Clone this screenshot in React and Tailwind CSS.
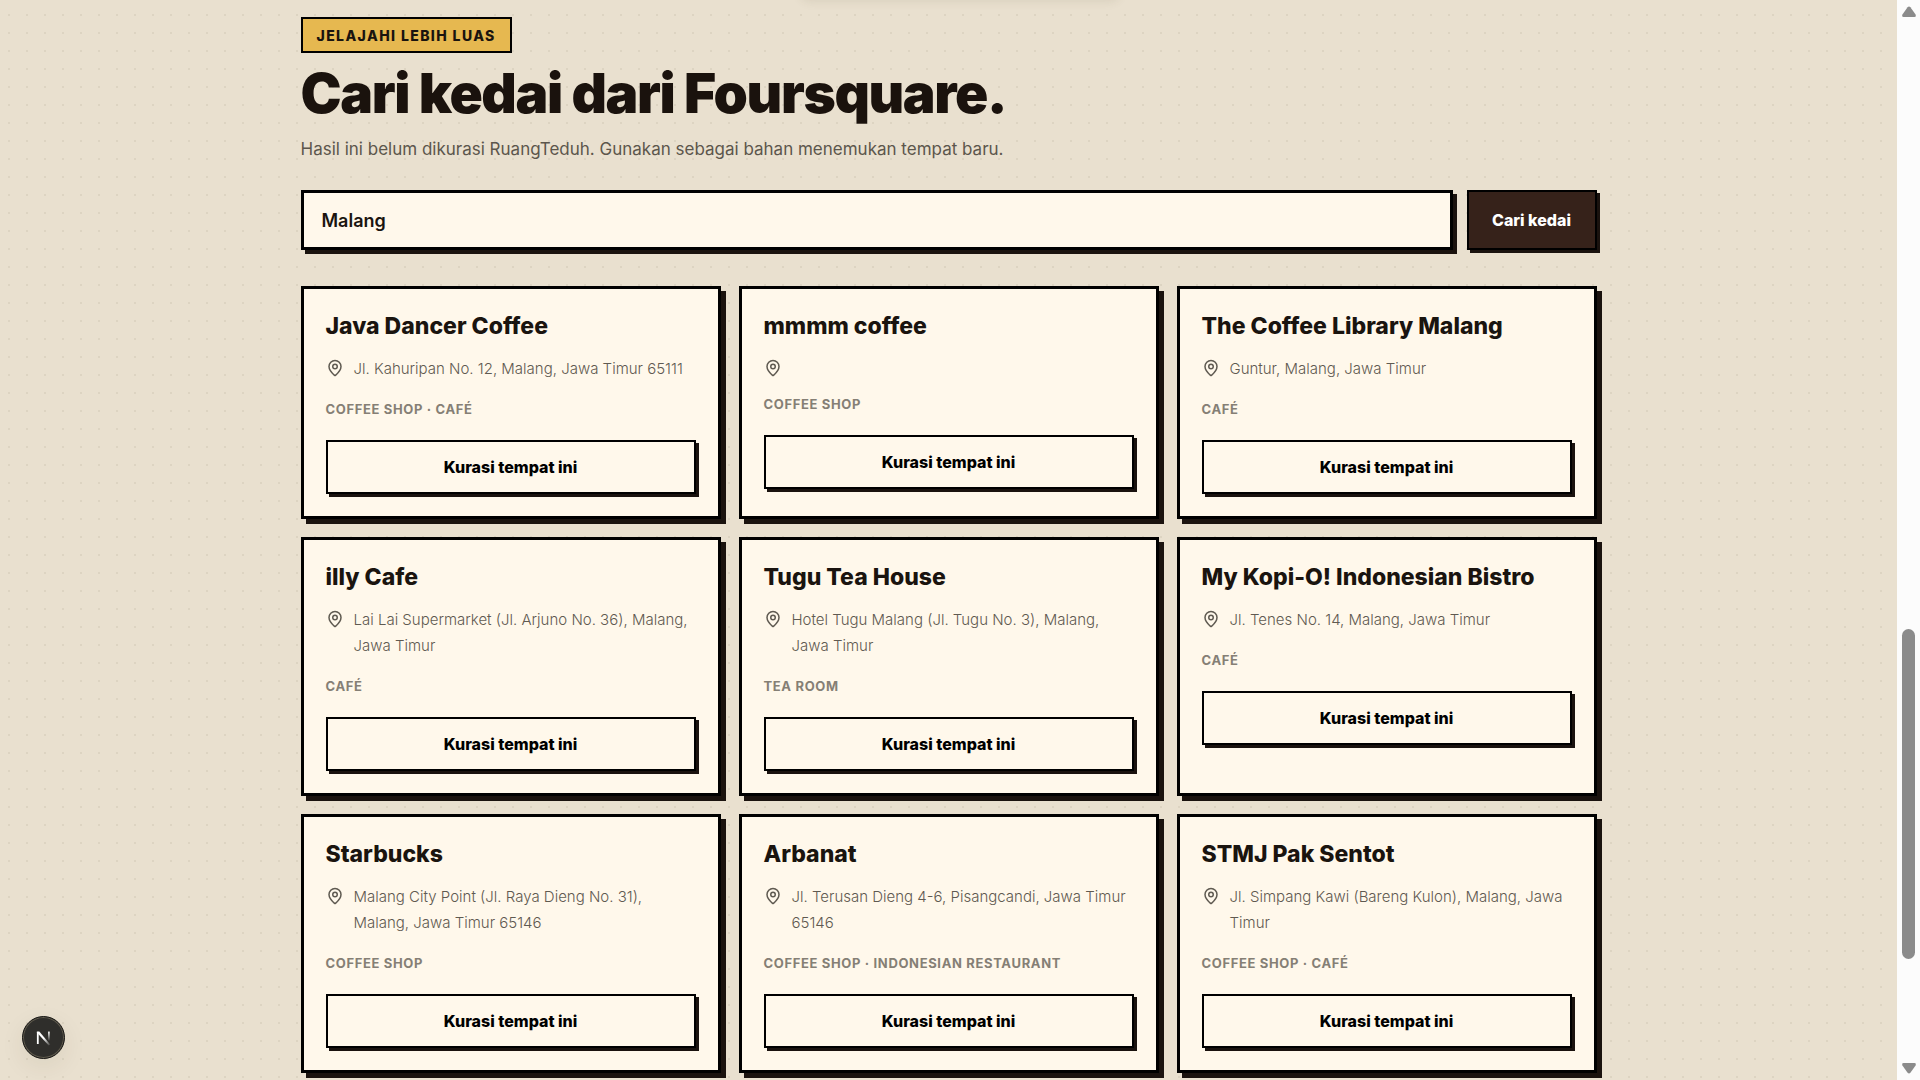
import { useState } from 'react'
import { MapPin } from 'lucide-react'

const PLACES = [
  { name: 'Java Dancer Coffee', address: 'Jl. Kahuripan No. 12, Malang, Jawa Timur 65111', categories: ['Coffee Shop', 'Café'] },
  { name: 'mmmm coffee', address: '', categories: ['Coffee Shop'] },
  { name: 'The Coffee Library Malang', address: 'Guntur, Malang, Jawa Timur', categories: ['Café'] },
  { name: 'illy Cafe', address: 'Lai Lai Supermarket (Jl. Arjuno No. 36), Malang, Jawa Timur', categories: ['Café'] },
  { name: 'Tugu Tea House', address: 'Hotel Tugu Malang (Jl. Tugu No. 3), Malang, Jawa Timur', categories: ['Tea Room'] },
  { name: 'My Kopi-O! Indonesian Bistro', address: 'Jl. Tenes No. 14, Malang, Jawa Timur', categories: ['Café'] },
  { name: 'Starbucks', address: 'Malang City Point (Jl. Raya Dieng No. 31), Malang, Jawa Timur 65146', categories: ['Coffee Shop'] },
  { name: 'Arbanat', address: 'Jl. Terusan Dieng 4-6, Pisangcandi, Jawa Timur 65146', categories: ['Coffee Shop', 'Indonesian Restaurant'] },
  { name: 'STMJ Pak Sentot', address: 'Jl. Simpang Kawi (Bareng Kulon), Malang, Jawa Timur', categories: ['Coffee Shop', 'Café'] },
]

function PlaceCard({ place }) {
  return (
    <article className="border-3 border-black bg-[#fff8eb] p-[22px] shadow-[5px_5px_0_#1a120e]">
      <h3 className="text-[23px] leading-[30px] font-extrabold text-[#1a140f]">{place.name}</h3>
      <div className="mt-[15px] flex items-start gap-2.5 text-[#5f5a51]">
        <MapPin size={18} className="mt-[3px] flex-shrink-0" />
        <p className="text-[15px] leading-[26px] font-light">{place.address}</p>
      </div>
      <p className="mt-[18px] text-[13px] leading-[18px] font-bold tracking-wider uppercase text-[#857f75]">
        {place.categories.join(' · ')}
      </p>
      <button className="mt-[22px] h-[54px] w-full border-2 border-black bg-[#fff8eb] text-[16px] font-extrabold text-black shadow-[3px_3px_0_#1a120e]">
        Kurasi tempat ini
      </button>
    </article>
  )
}

function Scrollbar() {
  return (
    <div aria-hidden="true" className="flex w-[23px] flex-shrink-0 flex-col items-center bg-[#fcfcfc] py-1.5">
      <svg width="14" height="12" viewBox="0 0 14 12" fill="#8b8b8b">
        <path d="M5.6 1.2Q7 -.4 8.4 1.2L13.6 8.6Q14.4 11 12.4 11H1.6Q-.4 11 .4 8.6Z" />
      </svg>
      <div className="grow-[611]" />
      <div className="h-[330px] w-[13px] rounded-full bg-[#8b8b8b]" />
      <div className="grow-[103]" />
      <svg width="14" height="12" viewBox="0 0 14 12" fill="#8b8b8b">
        <path d="M5.6 10.8Q7 12.4 8.4 10.8L13.6 3.4Q14.4 1 12.4 1H1.6Q-.4 1 .4 3.4Z" />
      </svg>
    </div>
  )
}

function DevBadge() {
  return (
    <button
      aria-label="Open Next.js Dev Tools"
      className="fixed bottom-[21px] left-[22px] flex size-[43px] items-center justify-center rounded-full border border-[#171614] bg-[#2f2e2b] shadow-[0_8px_24px_rgba(60,45,25,0.08)] ring-1 ring-[#615c4e] ring-inset"
    >
      <svg width="16" height="16" viewBox="0 0 16 16" fill="none">
        <defs>
          <linearGradient id="stem" x1="0" y1="1" x2="0" y2="11" gradientUnits="userSpaceOnUse">
            <stop stopColor="#fff" />
            <stop offset="1" stopColor="#fff" stopOpacity="0" />
          </linearGradient>
          <linearGradient id="slash" x1="8" y1="8" x2="14" y2="15" gradientUnits="userSpaceOnUse">
            <stop stopColor="#fff" />
            <stop offset="1" stopColor="#fff" stopOpacity="0.1" />
          </linearGradient>
        </defs>
        <path d="M1.8 14V2.2" stroke="#fff" strokeWidth="1.8" />
        <path d="M.9 1.6H3.3L14.2 14.6L12.7 15.5L.9 2.6Z" fill="url(#slash)" />
        <rect x="12" y="1.6" width="1.8" height="10" fill="url(#stem)" />
      </svg>
    </button>
  )
}

export default function App() {
  const [query, setQuery] = useState('Malang')

  return (
    <div className="flex h-screen overflow-hidden font-['Inter',sans-serif]">
      <main className="min-w-0 flex-1 overflow-hidden bg-[#e9e0cf] bg-[radial-gradient(circle,#ddd4c2_1px,transparent_1px)] bg-[length:18px_18px] bg-[position:0_6px] pt-[17px]">
        {/* soft edge of the floating nav above */}
        <div className="fixed -top-5 left-1/2 h-5 w-80 -translate-x-1/2 rounded-full shadow-[0_2px_10px_rgba(90,80,50,0.1)]" />

        <section className="mx-auto w-full max-w-[1296px]">
          <span className="inline-flex h-9 items-center border-2 border-black bg-[#e6b850] px-3.5 text-[14px] font-extrabold tracking-widest uppercase text-[#1a140f]">
            Jelajahi lebih luas
          </span>
          <h1 className="mt-2.5 text-[55px] leading-[60px] font-black tracking-tight text-[#1a120d]">
            Cari kedai dari Foursquare.
          </h1>
          <p className="mt-[11px] text-[17px] leading-[30px] text-[#5c564c]">
            Hasil ini belum dikurasi RuangTeduh. Gunakan sebagai bahan menemukan tempat baru.
          </p>

          <form className="mt-[26px] flex gap-3.5" onSubmit={(e) => e.preventDefault()}>
            <input
              type="text"
              aria-label="Kota"
              value={query}
              onChange={(e) => setQuery(e.target.value)}
              className="h-[60px] min-w-0 flex-1 border-3 border-black bg-[#fff8eb] px-[18px] text-[18px] font-semibold text-[#1a140f] shadow-[4px_4px_0_#1a120e] outline-none"
            />
            <button
              type="submit"
              className="h-[60px] w-[130px] border-2 border-black bg-[#36221a] text-[16px] font-extrabold text-white shadow-[3px_3px_0_#1a120e]"
            >
              Cari kedai
            </button>
          </form>

          <div className="mt-9 grid grid-cols-3 gap-[18px]">
            {PLACES.map((place) => (
              <PlaceCard key={place.name} place={place} />
            ))}
          </div>
        </section>
      </main>
      <Scrollbar />
      <DevBadge />
    </div>
  )
}
